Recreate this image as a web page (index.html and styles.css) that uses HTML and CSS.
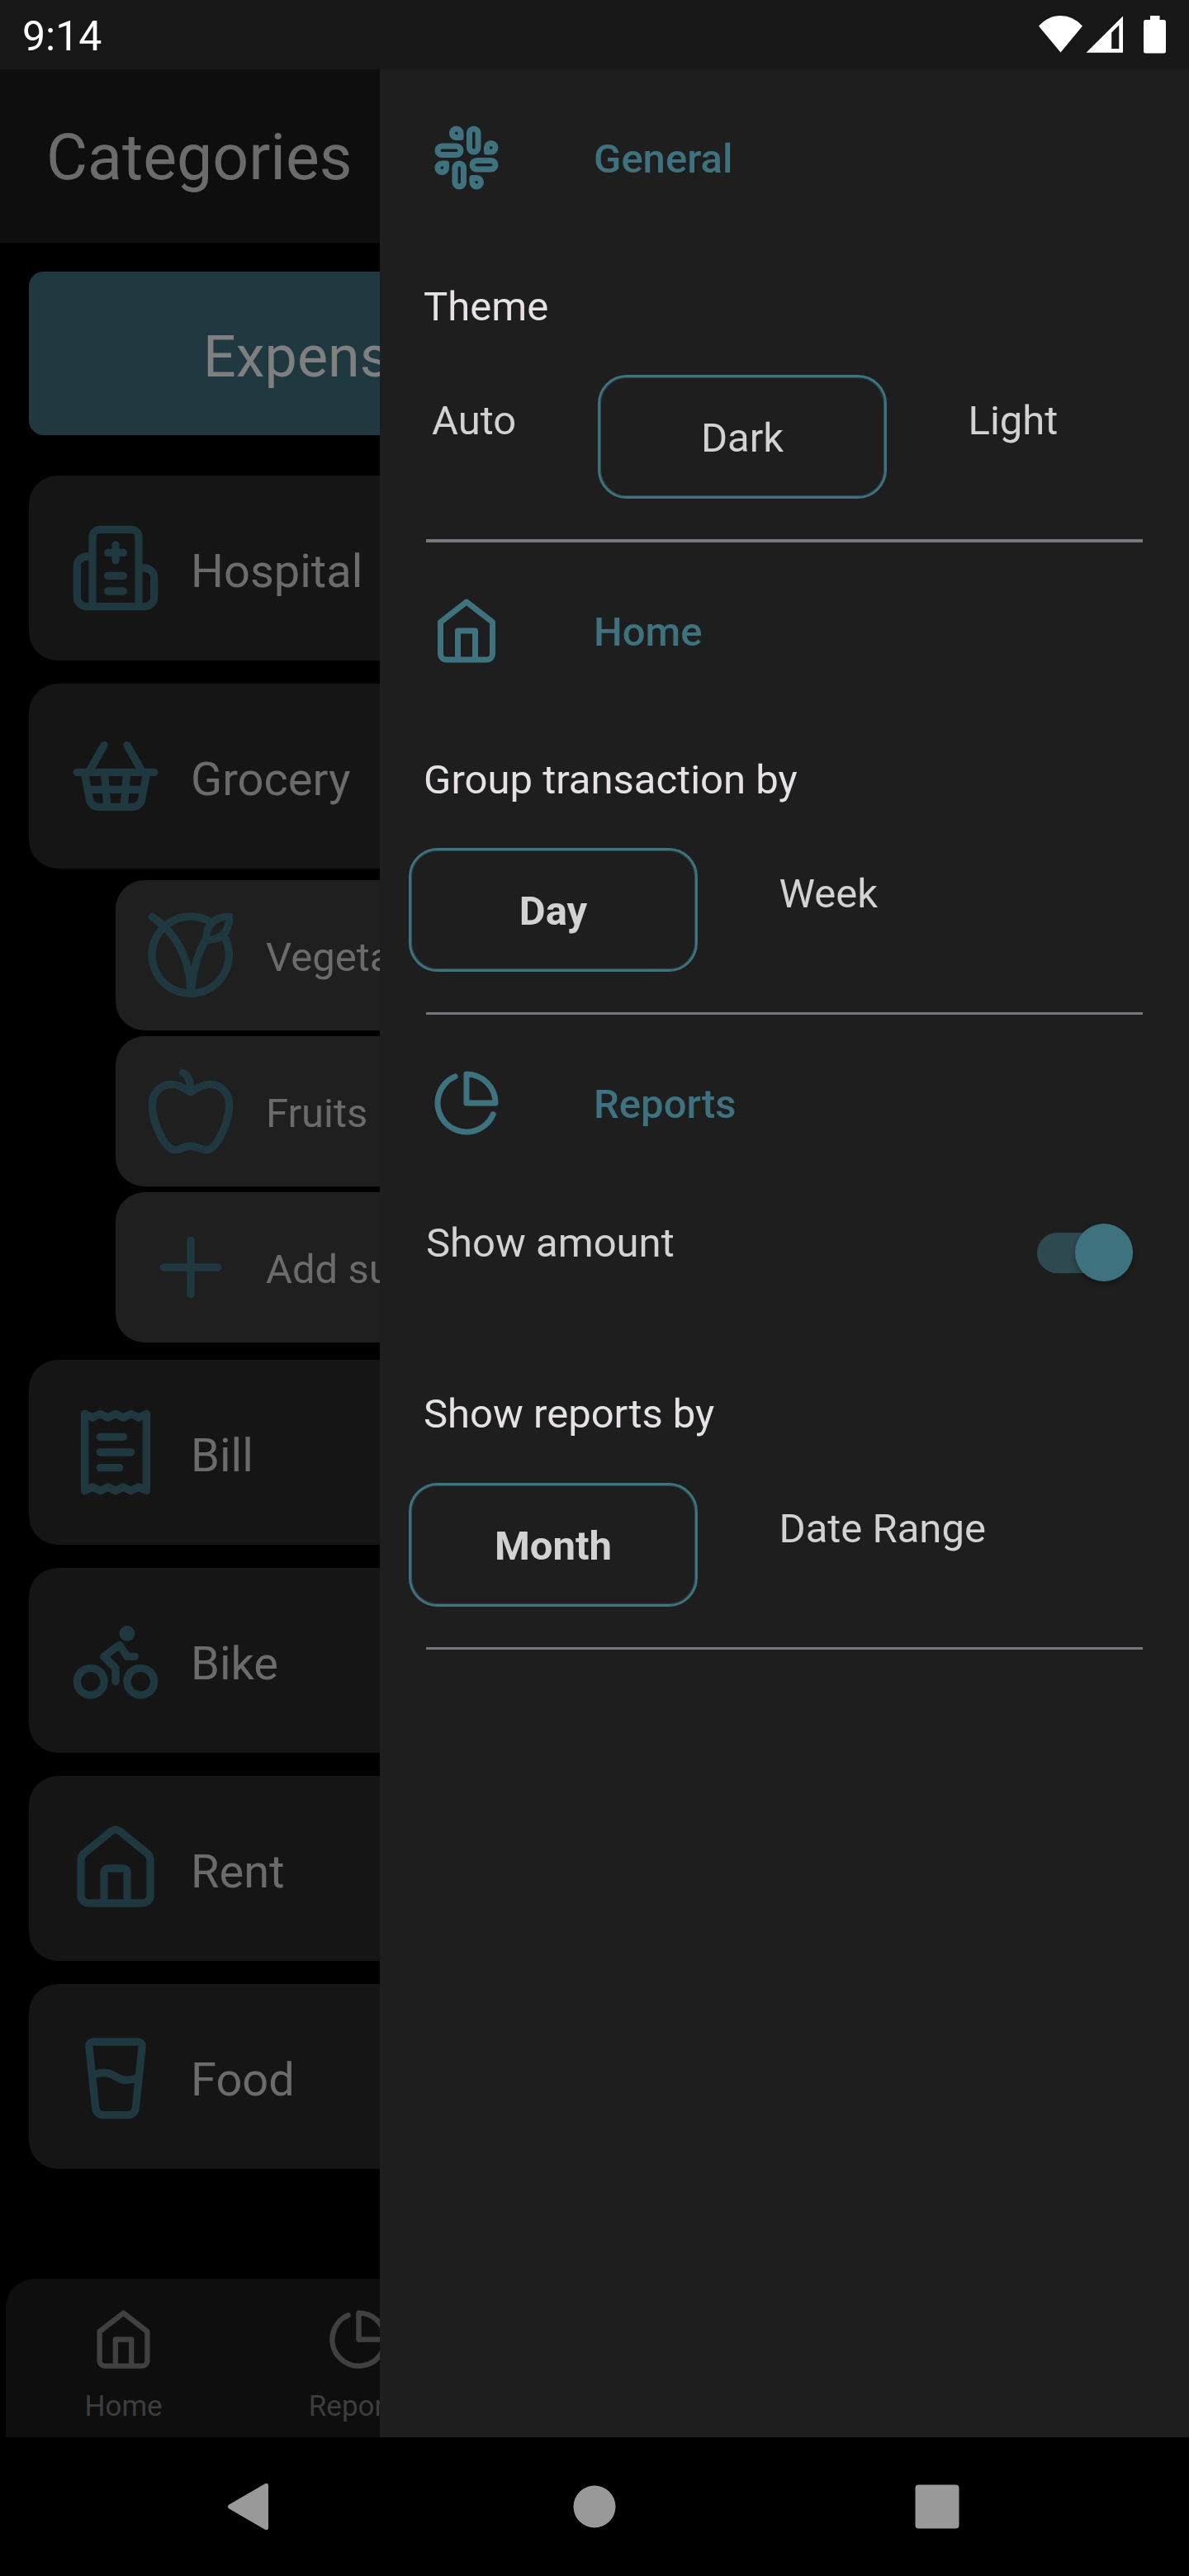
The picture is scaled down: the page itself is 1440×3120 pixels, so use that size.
FILE: index.html
```html
<!DOCTYPE html>
<html lang="en">
<head>
<meta charset="utf-8">
<title>Categories</title>
<link rel="stylesheet" href="styles.css">
</head>
<body>
<header class="status">
  <span class="clock">9:14</span>
  <svg class="status-icons" viewBox="0 0 156 48" width="156" height="48">
    <path d="M0 13.500Q11.500 1 26.500 1T53 13.500L26.500 45.500Z"/>
    <path fill-rule="evenodd" d="M102 1.500V45.700H57.500ZM97.300 12.500L88.200 21.500V41H97.300Z"/>
    <path d="M135 1h11.500v5H151.500a2.500 2.500 0 0 1 2.500 2.500V44a2.500 2.500 0 0 1-2.500 2.500H129.500A2.500 2.500 0 0 1 127 44V8.500A2.500 2.500 0 0 1 129.500 6H135Z"/>
  </svg>
</header>

<div class="app">
  <main class="page">
    <h1 class="page-title">Categories</h1>
    <div class="tab">Expense</div>
    <ul class="list">
      <li class="item">
        <svg class="icon" viewBox="0 0 24 24"><path d="M6 22V4a2 2 0 0 1 2-2h8a2 2 0 0 1 2 2v18M6 9H4.500A2.500 2.500 0 0 0 2 11.500V19.500A2.500 2.500 0 0 0 4.500 22H19.500A2.500 2.500 0 0 0 22 19.500V14.500A2.500 2.500 0 0 0 19.500 12H18M10 8h4M12 6v4M10 14h4M10 18h4"/></svg>
        <span>Hospital</span>
      </li>
      <li class="item">
        <svg class="icon" viewBox="0 0 24 24"><path d="M9 4L5 11M15 4l4 7M2 11h20M3.900 11L5.200 17.900A2.500 2.500 0 0 0 7.700 20H16.300A2.500 2.500 0 0 0 18.800 17.900L20.100 11M5 15.500h14M9.100 11l.7 9M14.900 11l-.7 9"/></svg>
        <span>Grocery</span>
      </li>
    </ul>
    <ul class="sublist">
      <li class="subitem">
        <svg class="icon" viewBox="0 0 24 24"><path d="M17 3.300A10 10 0 1 0 21 7.700M22 2C18 2 16 4 16 8C20 8 22 6 22 2ZM2 2L5.400 4.700C9 8.500 12 14 12 22M16 8Q13 12 12 22"/></svg>
        <span>Vegetables</span>
      </li>
      <li class="subitem">
        <svg class="icon" viewBox="0 0 24 24"><path d="M10 2C11.500 2.700 12 4.500 12 7M12 7C10.500 6 8.500 5 7 5C4 5 2 7.500 2 10.200C2 15 4.700 19.700 6.200 21.200C7 22 7.700 22.200 8.700 21.900C10 21.600 10.800 21 12 21C13.200 21 14 21.600 15.300 21.900C16.300 22.200 17 22 17.800 21.200C19.300 19.700 22 15 22 10.200C22 7.500 20 5 17 5C15.500 5 13.500 6 12 7Z"/></svg>
        <span>Fruits</span>
      </li>
      <li class="subitem">
        <svg class="icon" viewBox="0 0 24 24"><path d="M5 12h14M12 5v14"/></svg>
        <span>Add sub</span>
      </li>
    </ul>
    <ul class="list list-rest">
      <li class="item">
        <svg class="icon" viewBox="0 0 24 24"><path d="M4 2l2 1 2-1 2 1 2-1 2 1 2-1 2 1 2-1v20l-2-1-2 1-2-1-2 1-2-1-2 1-2-1-2 1ZM8 8h6M8 12h8M8 16h5"/></svg>
        <span>Bill</span>
      </li>
      <li class="item">
        <svg class="icon" viewBox="0 0 24 24"><circle cx="5.500" cy="17.500" r="3.500"/><circle cx="18.500" cy="17.500" r="3.500"/><circle class="solid" cx="15" cy="5" r="2"/><path d="M17 11H15L13 8L9 11L12 14V17.500"/></svg>
        <span>Bike</span>
      </li>
      <li class="item">
        <svg class="icon" viewBox="0 0 24 24"><path d="M3 9.700A2.500 2.500 0 0 1 3.800 8.100L10.800 2.400A1.900 1.900 0 0 1 13.200 2.400L20.200 8.100A2.500 2.500 0 0 1 21 9.700V19A2 2 0 0 1 19 21H5A2 2 0 0 1 3 19ZM9 21v-8a1 1 0 0 1 1-1h4a1 1 0 0 1 1 1v8"/></svg>
        <span>Rent</span>
      </li>
      <li class="item">
        <svg class="icon" viewBox="0 0 24 24"><path d="M5.100 4.100A1 1 0 0 1 6.100 3H17.900A1 1 0 0 1 18.900 4.100L17.200 20.200A2 2 0 0 1 15.200 22H8.800A2 2 0 0 1 6.800 20.200ZM6.800 11.400C8.500 10.800 10.300 10.900 12 12S15.500 13.300 17.400 12.400"/></svg>
        <span>Food</span>
      </li>
    </ul>
    <nav class="bottom-nav">
      <a class="nav-cell">
        <svg class="nav-icon" viewBox="0 0 24 24"><path d="M3 9l9-7 9 7v11a2 2 0 0 1-2 2H5a2 2 0 0 1-2-2zM9 22V12h6v10"/></svg>
        <span>Home</span>
      </a>
      <a class="nav-cell">
        <svg class="nav-icon" viewBox="0 0 24 24"><path d="M21.210 15.890A10 10 0 1 1 8 2.830M22 12A10 10 0 0 0 12 2v10z"/></svg>
        <span>Reports</span>
      </a>
    </nav>
  </main>

  <aside class="drawer">
    <section class="group">
      <h2 class="heading">
        <svg class="heading-icon" viewBox="0 0 24 24"><path d="M14.500 10c-.83 0-1.500-.67-1.500-1.500v-5c0-.83.67-1.500 1.500-1.500s1.500.67 1.500 1.500v5c0 .83-.67 1.500-1.500 1.500zM20.500 10H19V8.500c0-.83.67-1.500 1.500-1.500s1.500.67 1.500 1.500-.67 1.500-1.500 1.500zM9.500 14c.83 0 1.500.67 1.500 1.500v5c0 .83-.67 1.500-1.500 1.500S8 21.330 8 20.500v-5c0-.83.67-1.500 1.500-1.500zM3.500 14H5v1.500c0 .83-.67 1.500-1.500 1.500S2 16.330 2 15.500 2.670 14 3.500 14zM14 14.500c0-.83.67-1.500 1.500-1.500h5c.83 0 1.500.67 1.500 1.500s-.67 1.500-1.500 1.500h-5c-.83 0-1.500-.67-1.500-1.500zM15.500 19H14v1.500c0 .83.67 1.500 1.500 1.500s1.500-.67 1.500-1.500-.67-1.500-1.500-1.500zM10 9.500C10 8.670 9.330 8 8.500 8h-5C2.670 8 2 8.670 2 9.500S2.670 11 3.500 11h5c.83 0 1.500-.67 1.500-1.500zM8.500 5H10V3.500C10 2.670 9.330 2 8.500 2S7 2.670 7 3.500 7.670 5 8.500 5z"/></svg>
        <span>General</span>
      </h2>
      <h3 class="label">Theme</h3>
      <div class="options">
        <span class="option option-first">Auto</span>
        <span class="selected">Dark</span>
        <span class="option">Light</span>
      </div>
      <hr class="rule rule-thick">
    </section>
    <section class="group">
      <h2 class="heading">
        <svg class="heading-icon" viewBox="0 0 24 24"><path d="M3 9l9-7 9 7v11a2 2 0 0 1-2 2H5a2 2 0 0 1-2-2zM9 22V12h6v10"/></svg>
        <span>Home</span>
      </h2>
      <h3 class="label">Group transaction by</h3>
      <div class="options">
        <span class="selected strong">Day</span>
        <span class="option">Week</span>
      </div>
      <hr class="rule">
    </section>
    <section class="group">
      <h2 class="heading">
        <svg class="heading-icon" viewBox="0 0 24 24"><path d="M21.210 15.890A10 10 0 1 1 8 2.830M22 12A10 10 0 0 0 12 2v10z"/></svg>
        <span>Reports</span>
      </h2>
      <div class="toggle-row">
        <span>Show amount</span>
        <span class="switch"><span class="thumb"></span></span>
      </div>
      <h3 class="label label-late">Show reports by</h3>
      <div class="options">
        <span class="selected strong">Month</span>
        <span class="option">Date Range</span>
      </div>
      <hr class="rule">
    </section>
  </aside>
</div>

<footer class="system-nav">
  <svg class="sys" viewBox="0 0 60 60"><path d="M2.500 27.500L45.500 2.500Q50 0 50 5V55Q50 60 45.500 57.500L2.500 32.500Q-1 30 2.500 27.500Z"/></svg>
  <svg class="sys" viewBox="0 0 60 60"><circle cx="30" cy="30" r="25.500"/></svg>
  <svg class="sys" viewBox="0 0 60 60"><rect x="3.500" y="3.500" width="53" height="53" rx="4"/></svg>
</footer>
</body>
</html>
```
FILE: styles.css
```css
* { box-sizing: border-box; }
body {
  margin: 0;
  width: 1440px;
  height: 3120px;
  overflow: hidden;
  background: #000;
  font-family: Roboto, sans-serif;
  display: flex;
  flex-direction: column;
}
h1, h2, h3, ul { margin: 0; padding: 0; font-weight: 400; list-style: none; }

.status {
  height: 84px;
  background: #171717;
  color: #fff;
  display: flex;
  align-items: flex-start;
  justify-content: space-between;
  padding: 15px 26px 0 27px;
}
.clock { font-size: 50px; line-height: 58px; }
.status-icons { fill: #fff; margin-top: 3px; }

.app { position: relative; height: 2868px; overflow: hidden; }
.page { height: 100%; display: flex; flex-direction: column; }
.page-title {
  height: 210px;
  background: #0e0e0e;
  color: #6b6b6b;
  font-size: 77px;
  line-height: 90px;
  padding: 62px 0 0 56px;
}
.tab {
  width: 685px;
  height: 198px;
  margin: 35px 0 0 35px;
  border-radius: 17.5px;
  background: #203840;
  color: #7f7f7f;
  font-size: 70px;
  line-height: 82px;
  padding-top: 62px;
  text-align: center;
}
.list { display: flex; flex-direction: column; gap: 28px; margin: 49px 35px 0; }
.item, .subitem {
  display: flex;
  align-items: center;
  gap: 35px;
  border-radius: 35px;
  color: #6b6b6b;
  white-space: nowrap;
}
.item { height: 224px; background: #151515; padding-left: 49px; font-size: 56px; }
.item span { padding-top: 8px; }
.sublist { display: flex; flex-direction: column; gap: 7px; margin: 14px 35px 0 140px; }
.subitem { height: 182px; background: #1f1f1f; padding-left: 35px; font-size: 49px; }
.subitem span { padding-top: 4px; }
.list-rest { margin-top: 21px; }
.icon, .nav-icon, .heading-icon {
  flex: none;
  fill: none;
  stroke-width: 2;
  stroke-linecap: round;
  stroke-linejoin: round;
}
.icon { width: 112px; height: 112px; stroke: #1f3840; }
.solid { fill: #1f3840; stroke: none; }

.bottom-nav {
  height: 192px;
  margin: auto 7px 0;
  border-radius: 35px 35px 0 0;
  background: #0e0e0e;
  display: grid;
  grid-template-columns: repeat(5, 1fr);
}
.nav-cell {
  display: flex;
  flex-direction: column;
  align-items: center;
  padding-top: 34.5px;
  color: #3d3d3d;
  font-size: 35px;
  line-height: 41px;
}
.nav-icon { width: 77px; height: 77px; stroke: #404040; margin-bottom: 22px; }

.drawer {
  position: absolute;
  top: 0;
  right: 0;
  bottom: 0;
  width: 980px;
  background: #1e1e1e;
  color: #d2d2d2;
  font-size: 49px;
  line-height: 58px;
}
.group { padding: 64.5px 56px 0 35px; }
.heading {
  display: flex;
  align-items: center;
  gap: 112px;
  margin-left: 28px;
  color: #3e727f;
  font-size: 49px;
  font-weight: 500;
}
.heading span { padding-top: 5px; }
.heading-icon { width: 84px; height: 84px; stroke: #3e727f; }
.label { margin: 110px 0 53.5px 18px; font-size: 49px; color: #e6e1e5; }
.label-late { margin: 142px 0 54px 18px; }
.options { display: flex; height: 150px; }
.option { margin: 27px 0 0 98.5px; }
.option-first { width: 201px; margin-left: 28px; }
.selected {
  width: 350px;
  height: 150px;
  border: 3px solid #3e727f;
  border-radius: 35px;
  box-shadow: inset 0 0 0 1px #2e4950;
  line-height: 148px;
  text-align: center;
}
.strong { font-weight: 700; }
.rule { height: 3px; border: 0; margin: 49px 0 0 21px; background: #79747e; }
.rule-thick { height: 4px; }
.toggle-row {
  display: flex;
  justify-content: space-between;
  margin-top: 99px;
  padding: 0 12px 0 21px;
}
.switch {
  width: 116px;
  height: 49px;
  margin-top: 16px;
  border-radius: 24.5px;
  background: #2f4950;
  display: flex;
  align-items: center;
  justify-content: flex-end;
}
.thumb {
  flex: none;
  width: 70px;
  height: 70px;
  border-radius: 50%;
  background: #3e727f;
  box-shadow: 0 4px 7px rgba(0, 0, 0, .3);
}

.system-nav {
  flex: 1;
  display: flex;
  justify-content: center;
  align-items: center;
  gap: 355px;
}
.sys { width: 60px; height: 60px; fill: #999; }
```
